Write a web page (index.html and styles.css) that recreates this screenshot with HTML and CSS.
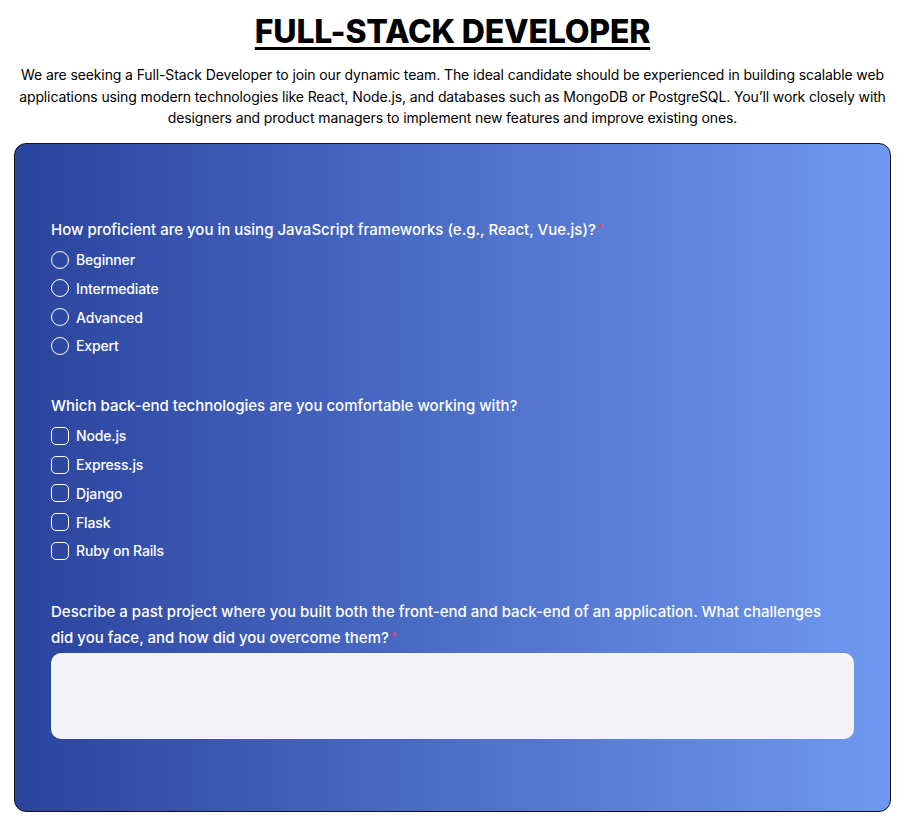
FILE: index.html
```html
<!DOCTYPE html>
<html lang="en">
<head>
<meta charset="utf-8">
<title>Full-Stack Developer</title>
<link rel="stylesheet" href="styles.css">
</head>
<body>
<main class="page">
  <header class="intro">
    <h1 class="title">FULL-STACK DEVELOPER</h1>
    <p class="desc">We are seeking a Full-Stack Developer to join our dynamic team. The ideal candidate should be experienced in building scalable web applications using modern technologies like React, Node.js, and databases such as MongoDB or PostgreSQL. You’ll work closely with designers and product managers to implement new features and improve existing ones.</p>
  </header>
  <form class="card">
    <fieldset class="group">
      <legend class="question">How proficient are you in using JavaScript frameworks (e.g., React, Vue.js)?<span class="req">*</span></legend>
      <div class="options">
        <label class="option"><span class="radio"></span>Beginner</label>
        <label class="option"><span class="radio"></span>Intermediate</label>
        <label class="option"><span class="radio"></span>Advanced</label>
        <label class="option"><span class="radio"></span>Expert</label>
      </div>
    </fieldset>
    <fieldset class="group">
      <legend class="question">Which back-end technologies are you comfortable working with?</legend>
      <div class="options">
        <label class="option"><span class="check"></span>Node.js</label>
        <label class="option"><span class="check"></span>Express.js</label>
        <label class="option"><span class="check"></span>Django</label>
        <label class="option"><span class="check"></span>Flask</label>
        <label class="option"><span class="check"></span>Ruby on Rails</label>
      </div>
    </fieldset>
    <div class="group group-text">
      <label class="question q-text">Describe a past project where you built both the front-end and back-end of an application. What challenges did you face, and how did you overcome them?<span class="req">*</span></label>
      <div class="textarea"></div>
    </div>
  </form>
</main>
</body>
</html>
```
FILE: styles.css
```css
* { box-sizing: border-box; }
html, body { margin: 0; padding: 0; background: #fff; }
body {
  font-family: Inter, "Noto Sans", sans-serif;
  color: #000;
}
.page {
  padding: 12px 17px 16px 14px;
}
.intro {
  text-align: center;
}
.title {
  margin: 0;
  font-size: 32px;
  line-height: 40px;
  font-weight: 800;
  text-decoration: underline;
  text-decoration-thickness: 3px;
  text-underline-offset: 4px;
  letter-spacing: -0.2px;
}
.desc {
  margin: 12px 0 0;
  font-size: 14px;
  line-height: 21.5px;
  letter-spacing: -0.12px;
}
.card {
  margin-top: 14px;
  border: 1px solid #141414;
  border-radius: 12px;
  background: linear-gradient(to right, #2b449e, #6f99f1);
  padding: 73px 36px 72px 36px;
  color: #fff;
  display: flex;
  flex-direction: column;
  gap: 37px;
}
.group {
  border: 0;
  margin: 0;
  padding: 0;
  min-width: 0;
}
.group-text { margin-top: 1px; }
.question {
  display: block;
  padding: 0;
  font-size: 15px;
  line-height: 26px;
  font-weight: 500;
  color: #fff;
  margin-bottom: 7px;
}
.req {
  color: #e8405f;
  font-size: 11px;
  line-height: 0;
  margin-left: 2px;
  vertical-align: 3px;
}
.options {
  display: flex;
  flex-direction: column;
  gap: 8.75px;
}
.option {
  display: flex;
  align-items: center;
  gap: 7px;
  height: 20px;
  font-size: 14px;
  font-weight: 500;
  letter-spacing: -0.15px;
}
.radio, .check {
  width: 18px;
  height: 18px;
  border: 1px solid #fff;
  flex: none;
}
.radio { border-radius: 50%; }
.check { border-radius: 5px; }
.q-text {
  margin-bottom: 2px;
  padding-right: 26px;
}
.textarea {
  height: 86px;
  background: #f3f3f5;
  border-radius: 10px;
}
```
